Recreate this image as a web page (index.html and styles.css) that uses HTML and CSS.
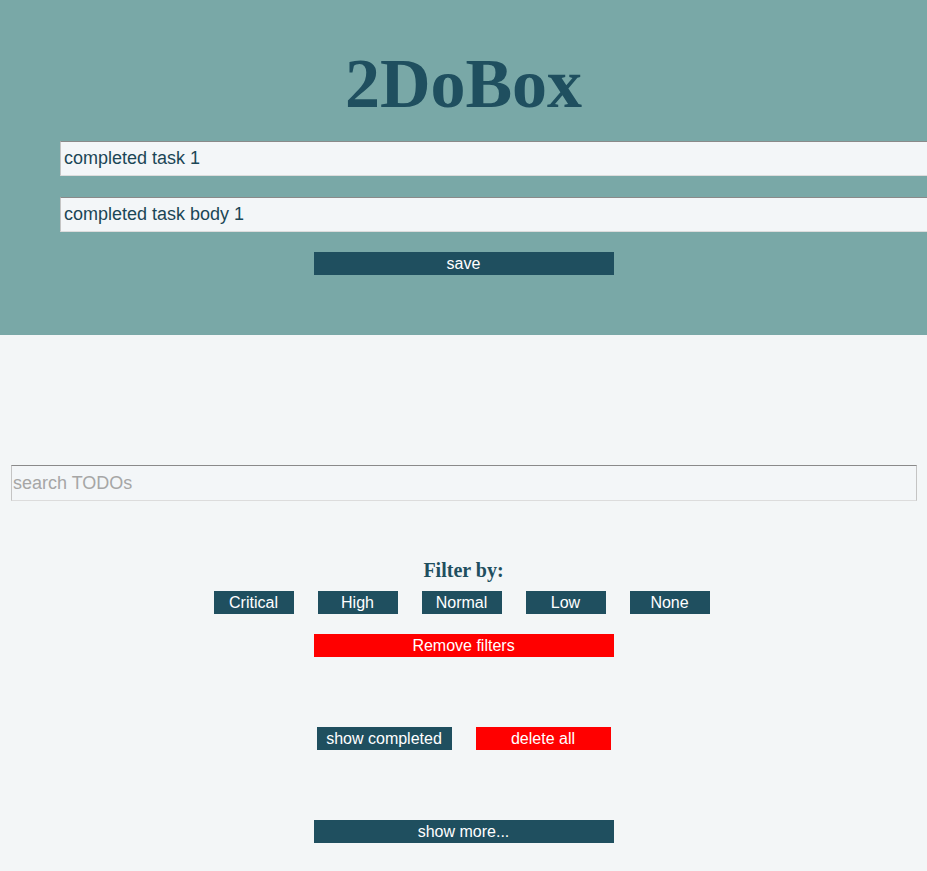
FILE: index.html
```html
<!DOCTYPE html>
<html lang="en">
<head>
<meta charset="utf-8">
<title>2DoBox</title>
<link rel="stylesheet" href="styles.css">
</head>
<body>
<header class="top">
  <h1 class="title">2DoBox</h1>
  <input class="field" type="text" value="completed task 1">
  <input class="field field-body" type="text" value="completed task body 1">
  <div class="center">
    <button class="btn btn-wide">save</button>
  </div>
</header>
<main class="main">
  <input class="search" type="text" placeholder="search TODOs">
  <h3 class="filter-title">Filter by:</h3>
  <div class="filters">
    <button class="btn btn-filter">Critical</button>
    <button class="btn btn-filter">High</button>
    <button class="btn btn-filter">Normal</button>
    <button class="btn btn-filter">Low</button>
    <button class="btn btn-filter">None</button>
  </div>
  <div class="center row-remove">
    <button class="btn btn-wide btn-red">Remove filters</button>
  </div>
  <div class="actions">
    <button class="btn btn-mid">show completed</button>
    <button class="btn btn-mid btn-red">delete all</button>
  </div>
  <div class="center row-more">
    <button class="btn btn-wide">show more...</button>
  </div>
</main>
</body>
</html>
```

FILE: styles.css
```css
html, body {
  margin: 0;
  padding: 0;
}
body {
  background: #f3f6f7;
  font-family: "Liberation Sans", Arial, sans-serif;
  color: #1f4f5f;
}
.top {
  background: #79a8a7;
  height: 335px;
  padding-top: 44px;
  box-sizing: border-box;
}
.title {
  margin: 0;
  font-family: "Liberation Serif", "Times New Roman", serif;
  font-weight: bold;
  font-size: 70px;
  line-height: 80px;
  height: 80px;
  text-align: center;
  color: #1f4f5f;
}
.field {
  display: block;
  box-sizing: border-box;
  width: 100%;
  height: 35px;
  margin: 17px 0 0 60px;
  padding: 0 3px;
  background: #f3f6f8;
  border: 1px solid;
  border-color: #8a8a8a #c4c4c4 #dcdcdc #c4c4c4;
  font-family: "Liberation Sans", Arial, sans-serif;
  font-size: 18px;
  color: #1b4656;
  outline: none;
}
.field-body {
  margin-top: 21px;
}
.center {
  display: flex;
  justify-content: center;
  margin-top: 20px;
}
.btn {
  display: block;
  height: 23px;
  padding: 0;
  border: none;
  background: #1f4f5f;
  color: #ffffff;
  font-family: "Liberation Sans", Arial, sans-serif;
  font-size: 16px;
  line-height: 23px;
  text-align: center;
  cursor: pointer;
}
.btn-wide {
  width: 300px;
}
.btn-red {
  background: #ff0000;
}
.main {
  padding-top: 130px;
  padding-bottom: 10px;
}
.search {
  display: block;
  box-sizing: border-box;
  width: 906px;
  height: 36px;
  margin: 0 0 0 11px;
  padding: 0 1px;
  background: #f3f6f8;
  border: 1px solid;
  border-color: #8a8a8a #c4c4c4 #dcdcdc #c4c4c4;
  font-family: "Liberation Sans", Arial, sans-serif;
  font-size: 18px;
  color: #1f4f5f;
  outline: none;
}
.search::placeholder {
  color: #a6a6a6;
}
.filter-title {
  margin: 57px 0 0;
  font-family: "Liberation Serif", "Times New Roman", serif;
  font-weight: bold;
  font-size: 20px;
  line-height: 24px;
  text-align: center;
  color: #1f4f5f;
}
.filters {
  display: flex;
  justify-content: center;
  gap: 24px;
  margin-top: 9px;
  padding-right: 4px;
}
.btn-filter {
  width: 80px;
}
.actions {
  display: flex;
  justify-content: center;
  gap: 24px;
  margin-top: 70px;
}
.btn-mid {
  width: 135px;
}
.row-remove {
  margin-top: 20px;
}
.row-more {
  margin-top: 70px;
}
```
